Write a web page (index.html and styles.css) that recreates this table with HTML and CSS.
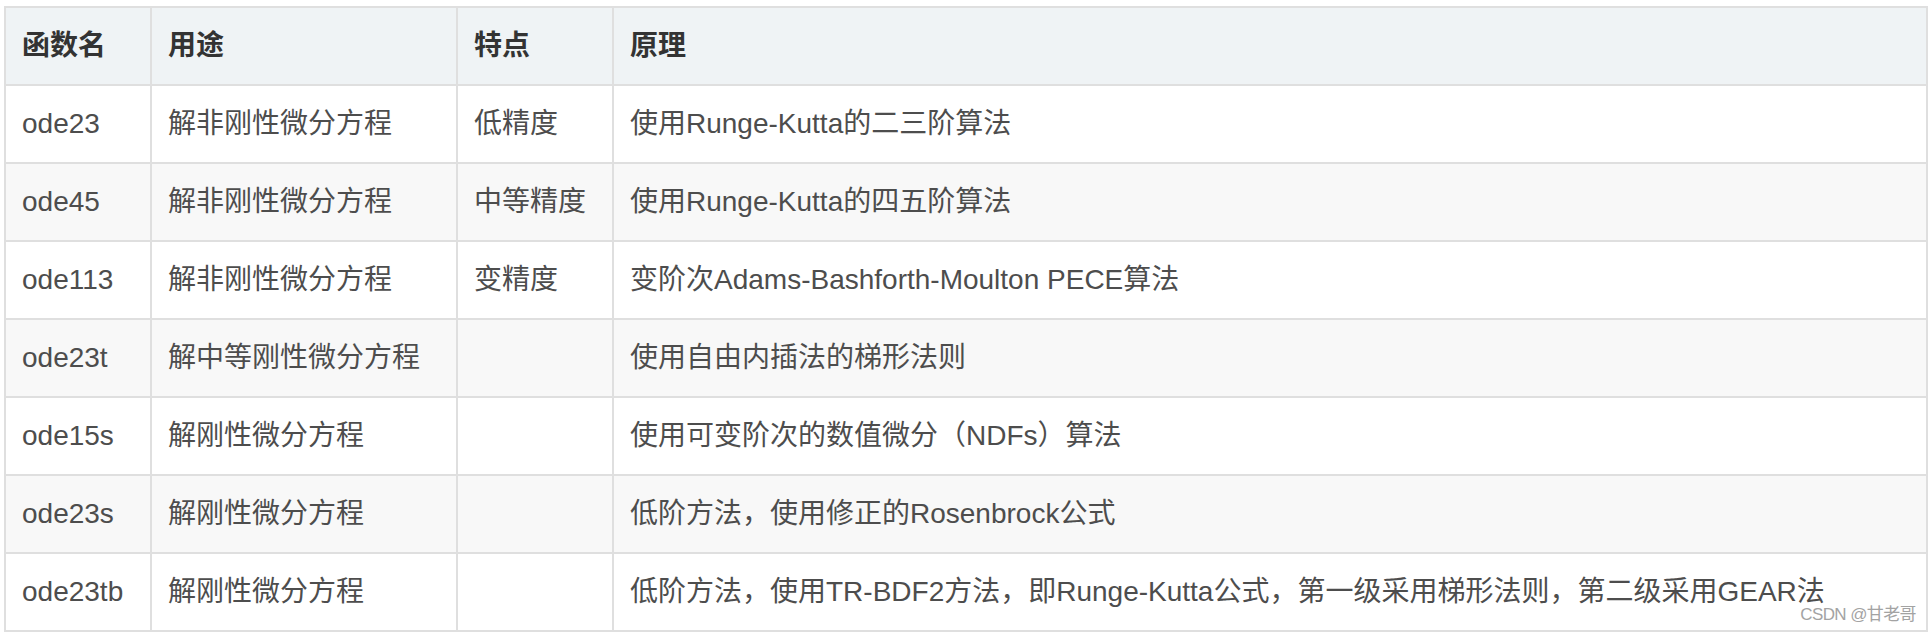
FILE: index.html
```html
<!DOCTYPE html>
<html lang="zh-CN">
<head>
<meta charset="utf-8">
<link rel="stylesheet" href="styles.css">
</head>
<body>
<div class="page">
  <table class="ode-table">
    <colgroup>
      <col class="c1"><col class="c2"><col class="c3"><col class="c4">
    </colgroup>
    <thead>
      <tr><th>函数名</th><th>用途</th><th>特点</th><th>原理</th></tr>
    </thead>
    <tbody>
      <tr><td>ode23</td><td>解非刚性微分方程</td><td>低精度</td><td>使用Runge-Kutta的二三阶算法</td></tr>
      <tr><td>ode45</td><td>解非刚性微分方程</td><td>中等精度</td><td>使用Runge-Kutta的四五阶算法</td></tr>
      <tr><td>ode113</td><td>解非刚性微分方程</td><td>变精度</td><td>变阶次Adams-Bashforth-Moulton PECE算法</td></tr>
      <tr><td>ode23t</td><td>解中等刚性微分方程</td><td></td><td>使用自由内插法的梯形法则</td></tr>
      <tr><td>ode15s</td><td>解刚性微分方程</td><td></td><td>使用可变阶次的数值微分（NDFs）算法</td></tr>
      <tr><td>ode23s</td><td>解刚性微分方程</td><td></td><td>低阶方法，使用修正的Rosenbrock公式</td></tr>
      <tr><td>ode23tb</td><td>解刚性微分方程</td><td></td><td>低阶方法，使用TR-BDF2方法，即Runge-Kutta公式，第一级采用梯形法则，第二级采用GEAR法</td></tr>
    </tbody>
  </table>
  <div class="watermark">CSDN @甘老哥</div>
</div>
</body>
</html>
```
FILE: styles.css
```css
html, body {
  margin: 0;
  padding: 0;
  background: #ffffff;
}
.page {
  position: relative;
  padding: 6px 4px 0 4px;
  font-family: "Liberation Sans", Arial, "Noto Sans CJK SC", sans-serif;
}
.ode-table {
  border-collapse: collapse;
  table-layout: fixed;
  width: 1924px;
  font-size: 28px;
  color: #4d4d4d;
}
.c1 { width: 146px; }
.c2 { width: 306px; }
.c3 { width: 156px; }
.c4 { width: auto; }
.ode-table th,
.ode-table td {
  border: 2px solid #dfdfdf;
  padding: 16px 16px;
  text-align: left;
  vertical-align: middle;
  white-space: nowrap;
  line-height: 44px;
}
.ode-table th {
  background: #eff3f5;
  color: #333333;
  font-weight: 600;
}
.ode-table tbody tr:nth-child(even) td {
  background: #f8f8f8;
}
.watermark {
  position: absolute;
  right: 16px;
  top: 604px;
  font-size: 17px;
  line-height: 22px;
  color: #a3a3a3;
  letter-spacing: -0.6px;
}
```
